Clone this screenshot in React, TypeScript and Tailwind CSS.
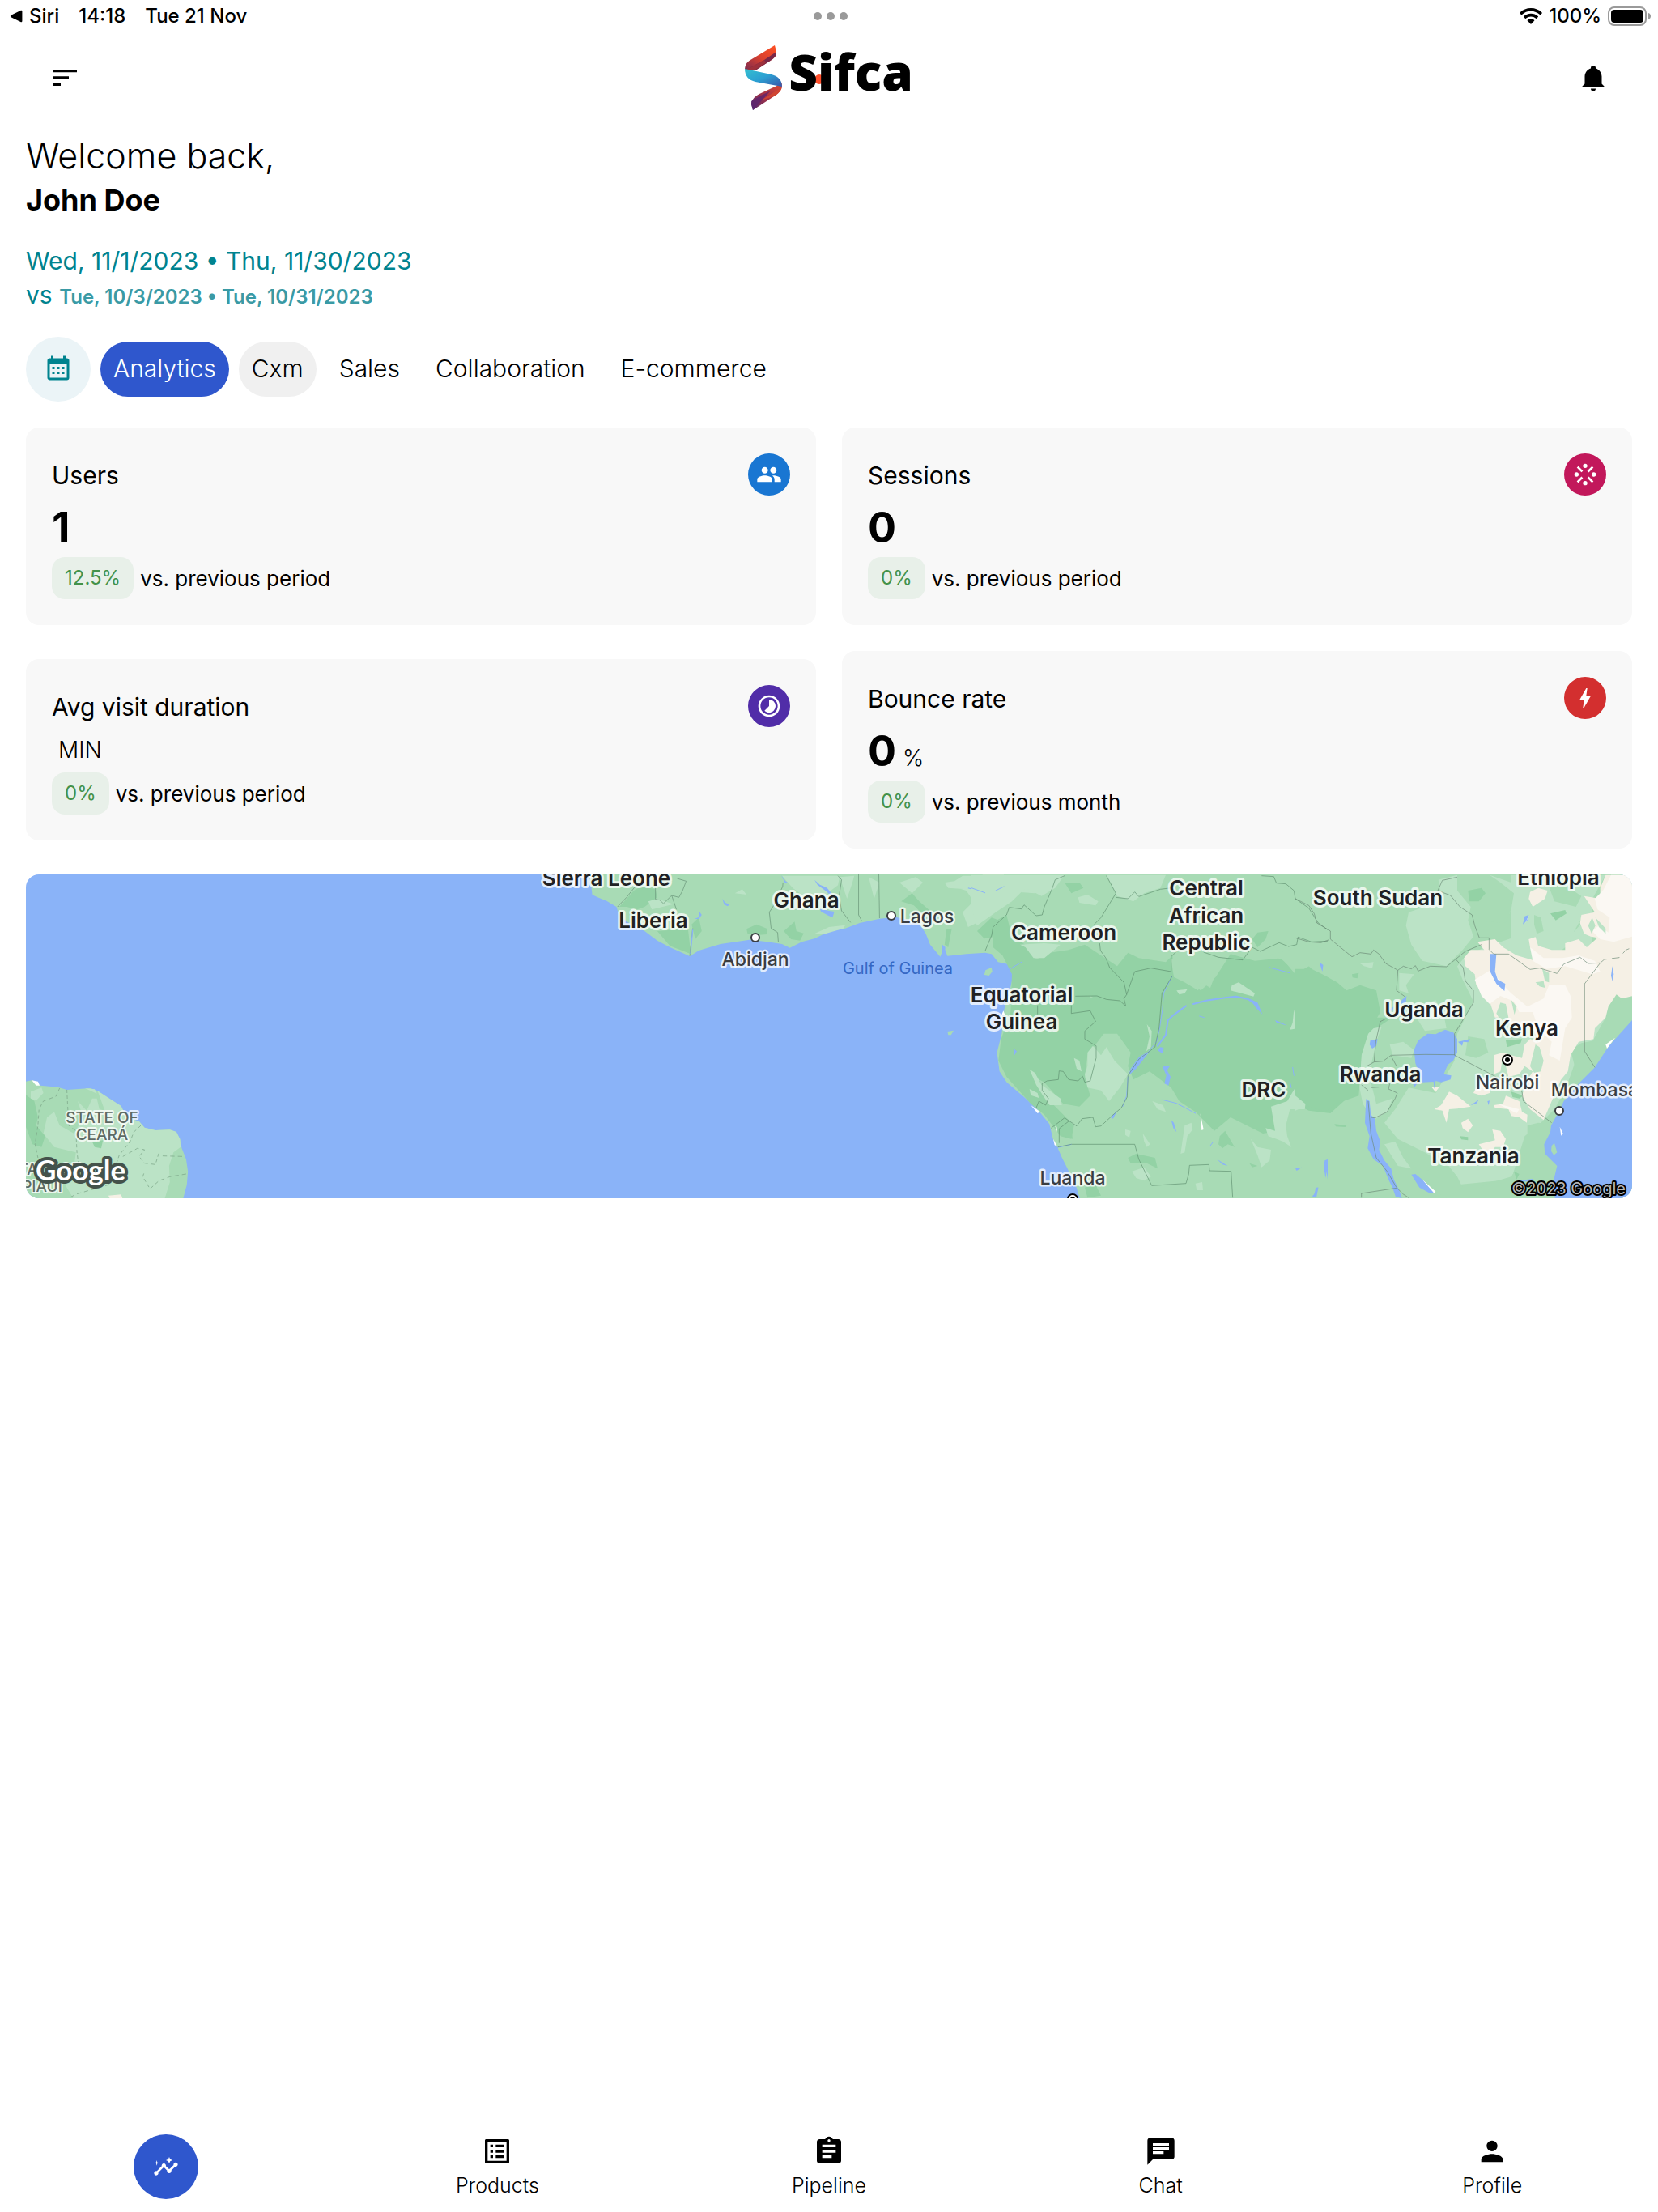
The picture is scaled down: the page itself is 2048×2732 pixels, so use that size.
import type { ReactNode } from "react";
import {
  MdSort,
  MdPeople,
  MdStream,
  MdTimelapse,
  MdBolt,
  MdInsights,
  MdListAlt,
  MdAssignment,
  MdChat,
  MdPerson,
} from "react-icons/md";

function StatusBar() {
  return (
    <div className="grid h-10 grid-cols-3 items-center pl-3 pr-2 text-2xl font-medium leading-10">
      <div className="flex items-center gap-6">
        <a href="#siri" className="flex items-center gap-2">
          <svg viewBox="0 0 16 16" className="size-4" fill="currentColor" aria-hidden="true">
            <path d="M1.6 6.8 13.4.9c1-.5 2 .1 2 1.1v12c0 1-1 1.600-2 1.100L1.600 9.200c-1-.5-1-1.900 0-2.400Z" />
          </svg>
          Siri
        </a>
        <span>14:18</span>
        <span>Tue 21 Nov</span>
      </div>
      <div className="flex justify-center gap-1.5">
        <i className="size-2.5 rounded-full bg-[#9a9a9a]" />
        <i className="size-2.5 rounded-full bg-[#9a9a9a]" />
        <i className="size-2.5 rounded-full bg-[#9a9a9a]" />
      </div>
      <div className="flex items-center justify-end gap-2">
        <svg viewBox="0 0 28 20" className="h-5 w-7" fill="currentColor" aria-hidden="true">
          <path d="M14 0C8.700 0 3.900 2 .4 5.400a.7.7 0 0 0 0 1l1.600 1.600c.3.300.7.300 1 0A15.800 15.800 0 0 1 14 3.700c4.200 0 8 1.600 11 4.300.3.300.7.300 1 0l1.600-1.600a.7.7 0 0 0 0-1C24.100 2 19.300 0 14 0Z" />
          <path d="M14 6.700c-3.400 0-6.500 1.300-8.800 3.400a.7.7 0 0 0 0 1l1.700 1.700c.2.200.6.300.9 0a9.400 9.400 0 0 1 12.400 0c.3.300.7.200.9 0l1.700-1.700a.7.7 0 0 0 0-1A13 13 0 0 0 14 6.700Z" />
          <path d="M14 13.300c-1.600 0-3 .5-4.100 1.500a.6.600 0 0 0 0 1l3.600 3.600c.3.300.7.300 1 0l3.600-3.600c.3-.3.300-.7 0-1a6.100 6.100 0 0 0-4.100-1.500Z" />
        </svg>
        <span>100%</span>
        <svg viewBox="0 0 54 24" className="h-6 w-[54px]" aria-hidden="true">
          <rect x="1" y="1" width="46" height="22" rx="7" fill="none" stroke="#9a9a9a" strokeWidth="2" />
          <rect x="4" y="4" width="40" height="16" rx="4" fill="#000" />
          <path d="M50 8c2 .6 3 2.200 3 4s-1 3.400-3 4Z" fill="#9a9a9a" />
        </svg>
      </div>
    </div>
  );
}

function Logo() {
  return (
    <div className="relative flex items-center gap-2" role="img" aria-label="Sifca">
      <svg viewBox="0 0 46 80" className="h-20 w-[46px]" aria-hidden="true">
        <defs>
          <linearGradient id="blue" x1="0" y1="0" x2="1" y2="1">
            <stop offset="0" stopColor="#35c0d0" />
            <stop offset=".5" stopColor="#2b9fd2" />
            <stop offset="1" stopColor="#3b55a8" />
          </linearGradient>
          <linearGradient id="top" x1="1" y1="0" x2="0" y2="1">
            <stop offset="0" stopColor="#ff5022" />
            <stop offset=".5" stopColor="#d8402f" />
            <stop offset="1" stopColor="#7a2a50" />
          </linearGradient>
          <linearGradient id="low" x1="1" y1="0" x2="0" y2="1">
            <stop offset="0" stopColor="#e04a30" />
            <stop offset=".5" stopColor="#a83245" />
            <stop offset="1" stopColor="#4c2a70" />
          </linearGradient>
        </defs>
        <path d="M37 0 7 18C1.500 21.500 0 25 0 31l13 0 20-13c5-3.500 6-6 6-10Z" fill="url(#top)" />
        <path d="M39 8 24 18 4 29l-4 2h13l20-13c5-3.500 6-6 6-10Z" fill="#7a2848" />
        <path d="M24 18 10 26l-8 4h11l13-8.500Z" fill="#a83238" opacity=".8" />
        <path d="M46 47 18 60C11 64 8 68 8 73l2 7 26-17c8-5 10-9 10-16Z" fill="url(#low)" />
        <path d="M8 69c4-3 14-8 24-13L10 80l-2-7Z" fill="#5a2370" opacity=".75" />
        <path d="M46 50c-2 4-5 5-10 8L20 68l16-5c8-5 10-9 10-13Z" fill="#d04432" />
        <path d="M0 29 33 36c8 2 13 7 13 15L13 45C5 43 0 38 0 29Z" fill="url(#blue)" />
      </svg>
      <span className="relative mb-4 font-['Open_Sans'] text-[62px] font-extrabold leading-[72px]">
        <i className="absolute left-8 top-10 size-3 rounded-full bg-[#ff4f2b]" />
        <span className="relative">Sifca</span>
      </span>
    </div>
  );
}

function Header() {
  return (
    <header className="grid h-28 grid-cols-3 items-center px-[60px]">
      <button type="button" aria-label="Menu" className="justify-self-start">
        <MdSort className="size-10" />
      </button>
      <div className="justify-self-center">
        <Logo />
      </div>
      <button type="button" aria-label="Notifications" className="justify-self-end">
        <svg viewBox="0 0 24 24" className="size-10 p-0.5" fill="currentColor" aria-hidden="true">
          <path d="M21,19V20H3V19L5,17V11C5,7.900 7.030,5.170 10,4.290C10,4.190 10,4.100 10,4A2,2 0 0,1 12,2A2,2 0 0,1 14,4C14,4.100 14,4.190 14,4.290C16.970,5.170 19,7.900 19,11V17L21,19M14,21A2,2 0 0,1 12,23A2,2 0 0,1 10,21" />
        </svg>
      </button>
    </header>
  );
}

const tabs = [
  { name: "Analytics", style: "bg-[#2f57cd] text-white" },
  { name: "Cxm", style: "bg-[#f0f0f0]" },
  { name: "Sales", style: "" },
  { name: "Collaboration", style: "" },
  { name: "E-commerce", style: "" },
];

function Tabs() {
  return (
    <div className="mt-[30px] flex items-center gap-3">
      <button
        type="button"
        aria-label="Choose dates"
        className="flex size-20 items-center justify-center rounded-full bg-[#ebf4f7] text-[#00838f]"
      >
        <svg viewBox="0 0 24 24" className="size-9" fill="currentColor" aria-hidden="true">
          <path d="M9,10V12H7V10H9M13,10V12H11V10H13M17,10V12H15V10H17M19,3A2,2 0 0,1 21,5V19A2,2 0 0,1 19,21H5C3.890,21 3,20.100 3,19V5A2,2 0 0,1 5,3H6V1H8V3H16V1H18V3H19M19,19V8H5V19H19M9,14V16H7V14H9M13,14V16H11V14H13M17,14V16H15V14H17Z" />
        </svg>
      </button>
      {tabs.map((t) => (
        <button
          key={t.name}
          type="button"
          className={`h-[68px] rounded-full px-4 pb-0.5 text-[30px] font-light ${t.style}`}
        >
          {t.name}
        </button>
      ))}
    </div>
  );
}

type StatProps = {
  title: string;
  value?: string;
  unit?: string;
  change: string;
  period: string;
  color: string;
  icon: ReactNode;
};

function StatCard({ title, value, unit, change, period, color, icon }: StatProps) {
  return (
    <section className="rounded-2xl bg-[#f8f8f8] p-8">
      <div className="flex h-[52px] items-center justify-between">
        <h2 className="pt-0.5 text-[30px] font-normal">{title}</h2>
        <span className={`flex size-[52px] items-center justify-center rounded-full text-white ${color}`}>
          {icon}
        </span>
      </div>
      <p className="flex items-baseline gap-2">
        {value ? <span className="-mb-1 text-[52px] font-bold leading-[80px]">{value}</span> : <span />}
        {unit && <span className="text-[28px] font-light leading-[56px]">{unit}</span>}
      </p>
      <p className="flex items-center gap-2">
        <span className="flex h-[52px] items-center rounded-2xl bg-[#e8f0e9] px-4 text-2xl text-[#43924a]">{change}</span>
        <span className="text-[26px]">{period}</span>
      </p>
    </section>
  );
}

const countries: [string, number, number][] = [
  ["Sierra Leone", 717, 14],
  ["Liberia", 775, 66],
  ["Ghana", 964, 41],
  ["Cameroon", 1282, 81],
  ["Central", 1458, 26],
  ["African", 1458, 60],
  ["Republic", 1458, 93],
  ["South Sudan", 1670, 38],
  ["Ethiopia", 1893, 13],
  ["Equatorial", 1230, 158],
  ["Guinea", 1230, 191],
  ["DRC", 1529, 275],
  ["Uganda", 1727, 176],
  ["Kenya", 1854, 199],
  ["Rwanda", 1673, 256],
  ["Tanzania", 1788, 357],
];

const cities: [string, number, number][] = [
  ["Lagos", 1113, 60],
  ["Abidjan", 901, 113],
  ["Nairobi", 1830, 265],
  ["Mombasa", 1938, 274],
  ["Luanda", 1293, 383],
];

const states: [string, number, number][] = [
  ["STATE OF", 94, 307],
  ["CEARÁ", 94, 328],
  ["STATE OF", 23, 371],
  ["PIAUÍ", 20, 392],
];

function WorldMap() {
  return (
    <div className="mt-8 overflow-hidden rounded-2xl bg-[#8ab3f8]">
      <svg
        viewBox="0 0 1984 400"
        preserveAspectRatio="xMidYMid slice"
        className="block h-[400px] w-full"
        role="img"
        aria-label="Map of visitors"
      >
        {/* South America */}
        <g transform="translate(-32 -10) scale(.44643 .33333)">
          <path fill="#a8dbb5" d="M60 800 90 792 112 812 160 818 185 828 250 822 270 832 300 858 335 888 350 930 385 945 400 968 430 978 470 976 488 984 498 1010 503 1045 515 1085 520 1130 517 1180 506 1235H60Z" />
          <path fill="#bbe3c6" d="M270 832 300 858 335 888 350 930 385 945 400 968 430 978 470 976 488 984 498 1010 500 1040 480 1060 468 1110 470 1170 455 1235H205L180 1180 205 1110 210 1060 150 1040 120 990 130 930 150 910 165 960 205 990 230 930 215 870 240 905 255 860 268 860 275 900 290 905Z" />
          <path fill="#93d2a5" d="M70 845 95 870 105 930 100 960 125 1000 115 1040 90 1030 70 960ZM255 1020 285 1015 280 1045 262 1040Z" />
          <path fill="#bbe3c6" d="M85 835 115 820 120 840 100 868 85 860ZM235 822 262 826 268 842Z" />
          <path fill="#fff" d="M88 793 105 797 110 812 100 812Z" />
          <path fill="#f5f0e5" d="M300 1220 335 1216 340 1235H305Z" />
          <g fill="none" stroke="#7fa98b" strokeWidth="2" strokeDasharray="12 9">
            <path d="M165 822 155 852 120 870 108 900 105 960 97 1030 105 1080M185 828 190 960 210 980 213 1060 218 1110M390 960 370 985 360 1020 330 1070 320 1110M340 1075 380 1045 400 1050 385 1075 400 1100 430 1105 440 1060M450 1073 505 1075M515 1140 470 1150 440 1165 415 1195 395 1150 400 1130M320 1140 300 1180 210 1215 190 1230" />
          </g>
        </g>
        {/* African mainland: west coast down to Angola */}
        <g transform="translate(608 -10) scale(.44643 .33333)">
          <path fill="#a8dbb5" d="M195 30 203 80 205 105 220 115 245 128 272 150 278 175 300 205 350 240 385 275 420 300 475 333 500 312 560 288 610 278 640 272 690 280 730 288 752 302 785 280 820 268 860 242 905 230 945 210 1000 194 1045 188 1085 200 1112 215 1128 250 1140 290 1168 335 1178 300 1188 332 1240 325 1292 320 1310 325 1328 355 1365 365 1370 400 1362 450 1345 530 1338 620 1325 690 1332 760 1352 800 1400 855 1440 905 1470 955 1480 1010 1492 1040 1505 1080 1520 1120 1545 1190 1555 1235H3100V25H195Z" />
          <path fill="#93d2a5" d="M320 90 340 75 380 85 385 115 350 150 330 160 300 150 280 150ZM385 240 470 232 478 325 420 295ZM632 232 660 215 690 232 688 252 660 255 635 250ZM735 240 765 205 770 240 790 248 780 275 755 270ZM1270 240 1310 190 1340 205 1320 260 1290 268ZM480 215 500 190 508 240 490 270Z" />
          <path fill="#bbe3c6" d="M730 35 890 35 885 70 860 95 835 130 790 110 760 80ZM1230 35 1510 35 1460 60 1430 100 1380 95 1330 130 1300 190 1245 225 1230 170 1260 130 1240 90 1190 70ZM890 40 910 120 925 60 930 35ZM970 40 985 120 1000 60ZM1055 60 1100 40 1120 60 1090 100ZM1180 60 1230 50 1240 85 1190 80ZM820 250 860 225 905 218 900 230 850 250ZM620 85 632 105 600 100ZM360 130 385 120 430 140 370 160Z" />
          <path fill="#93d2a5" d="M1090 100 1110 130 1140 165 1125 185 1095 145 1060 130ZM1185 235 1200 230 1190 300 1180 290Z" />
          <path fill="#a8dbb5" d="M1293 385 1310 375 1312 390 1303 405 1290 402ZM1188 612 1205 608 1198 625 1190 625Z" />
          <path fill="#f5f0e5" d="M1285 32 1345 32 1320 42 1300 38 1300 55 1285 50Z" />
          <g fill="#8ab3f8">
            <path d="M820 50 835 68 855 80 870 105 865 108 850 90 828 68ZM835 158 860 165 875 168 870 190 858 182 838 168ZM565 120 573 135 585 140 580 148 570 142ZM500 165 508 180 500 195 488 195 500 188ZM1172 288 1182 300 1180 338 1172 330ZM1370 670 1383 680 1378 700 1370 690ZM728 32 740 55 748 62 738 60Z" />
          </g>
          <g fill="none" stroke="#6f9a7e" strokeWidth="2">
            <path d="M275 150 300 115 322 78M380 80 380 122 392 125 402 138 425 108 445 115 455 90 465 55 440 45M425 108 438 160M483 230 475 332M733 60 732 75 705 150 695 170 700 230 718 245 720 280M885 35 895 50 888 110 895 165 920 208M942 30 942 180 950 200M998 30 1000 192" />
          </g>
          <g fill="none" stroke="#8ab3f8" strokeWidth="3">
            <path d="M1245 80 1290 97M1320 92 1343 75M1355 385 1388 355M483 235 477 325" />
          </g>
        </g>
        {/* Central Africa */}
        <g transform="translate(1168 -10) scale(.33333)">
          <path fill="#93d2a5" d="M150 400 115 330 80 300 75 210 130 180 150 260 215 300 240 345 290 320 360 310 420 290 480 330 540 370 580 320 620 340 720 355 745 330 750 400 800 430 850 460 905 410 960 325 1050 350 1150 340 1200 400 1250 370 1320 410 1360 520 1450 480 1500 560 1560 560 1500 600 1445 690 1440 800 1380 870 1330 915 1250 905 1200 880 1120 900 1140 980 1080 990 1020 960 960 930 900 980 830 910 770 870 740 820 700 790 660 760 600 790 580 740 590 690 540 620 490 620 430 700 420 780 440 850 400 890 340 880 270 800 250 790 300 880 380 960 370 1010 330 1000 270 920 220 880 130 780 100 720 110 640 145 540Z" />
          <path fill="#a8dbb5" d="M740 345 900 340 900 410 885 450 850 430 840 460 790 430 750 410ZM1100 330 1250 290 1320 310 1320 410 1280 400 1250 370 1200 390 1150 345ZM440 480 450 485 440 490Z" />
          <path fill="#bbe3c6" d="M0 32 345 32 310 80 260 110 200 80 150 130 90 170 20 220 0 150ZM500 32 720 32 700 80 640 100 600 130 540 110 520 70ZM395 115 430 105 470 130 460 145 400 135ZM430 690 450 665 480 700 500 670 530 720 580 770 550 820 510 870 480 830 430 820 420 770 430 740ZM215 752 235 765 260 810 330 860 335 885 290 885 265 850 240 810ZM215 825 245 840 250 858 220 848ZM380 710 400 720 408 760 390 750ZM650 585 668 610 665 670 648 685 660 630ZM670 870 710 885 720 910 690 900ZM790 960 815 950 820 975 800 1000 790 1060 775 1065ZM1110 890 1170 870 1200 820 1215 850 1240 860 1235 900 1180 900 1165 960 1170 1000 1185 1040 1155 1020 1130 1010 1100 1000 1090 970 1125 980ZM1035 1010 1060 1040 1110 1050 1105 1090 1075 1115 1060 1070ZM595 1130 640 1115 665 1150 640 1165 610 1155ZM830 1175 855 1170 858 1200 835 1200ZM965 440 990 430 1050 470 1045 482 960 460ZM1195 530 1203 580 1210 600 1180 605 1190 580ZM570 975 590 980 585 1005 570 995ZM635 990 662 1030 650 1040 640 1020ZM760 460 800 455 790 470 770 475ZM180 290 270 285 330 290 270 340 230 340 200 300Z" />
          <path fill="#93d2a5" d="M920 1000 940 980 975 1040 950 1030 930 1045 915 1030ZM1030 1100 1060 1110 1040 1115ZM580 1080 610 1065 680 1080 690 1120 650 1100 590 1100ZM420 1190 460 1180 480 1220 430 1228ZM1040 270 1060 245 1100 240 1090 270 1060 300ZM345 60 400 60 415 80 370 100ZM320 980 370 970 375 1010 345 1000Z" />
          <path fill="#fff" d="M220 885 255 910 245 915ZM303 1010 318 1038 308 1033ZM118 535 125 552 112 550ZM310 962 316 965 318 985ZM848 915 860 975 853 978Z" />
          <g fill="#8ab3f8">
            <path d="M700 670 712 672 710 695 690 682ZM640 712 610 750 582 775 590 750 620 708 665 680ZM708 742 735 740 725 755 738 780 730 812 715 805 722 775ZM1125 570 1150 580 1170 590 1130 578ZM1290 358 1303 365 1300 390ZM740 940 750 950 760 985 748 970ZM910 1085 950 1110 930 1105ZM1200 1120 1225 1115 1205 1128ZM1310 1090 1320 1085 1320 1160ZM1275 1190 1285 1190 1275 1228 1262 1222 1272 1215ZM515 930 540 905 525 935ZM155 675 168 685 160 700ZM1030 490 1060 505 1078 548 1055 525Z" />
          </g>
          <g fill="none" stroke="#8ab3f8" strokeLinecap="round">
            <path strokeWidth="6" d="M690 665 720 625 728 570 750 550 795 517M822 510 870 497 940 487 980 482 1025 492 1050 510" />
            <path strokeWidth="3" d="M743 408 712 470 708 530 697 600 686 650 660 682M1105 375 1180 395M708 865 760 878 830 915M135 385 185 355M320 1042 370 1030M580 780 575 850 560 890M0 80 50 98M90 90 120 75M885 1035 895 1022M845 555 862 560M1190 745 1195 775M1180 800 1185 820" />
          </g>
          <g fill="none" stroke="#5f8f70" strokeWidth="2">
            <path d="M345 35 310 50 300 80 270 150 262 180 240 183 195 143 185 158 140 152 130 180 80 225 75 255 50 315M500 35 535 100 520 125 480 190 455 215M535 115 580 120 605 95 620 112 700 85 740 80 775 45M475 285 478 312 498 340 512 375 565 430 575 475 605 390 665 377 740 390 740 335 765 310M860 318 915 337 1005 347 1040 300 1070 315 1140 283 1175 297 1205 290 1210 262 1260 280 1320 277M1075 35 1120 38 1130 62 1165 65 1195 90 1200 120 1250 155 1285 210 1320 235M575 475 565 490 572 518 550 498 500 493 465 480 385 481M245 515V548M370 515V545L440 535 460 575 420 610 420 640 462 665 462 710 440 795 420 800 412 778 395 795 360 790 340 760 325 758 322 790 280 795 262 805 262 830 285 860 275 885 250 870 240 895M295 970 345 932 390 962 410 935 450 930 460 965 480 962 520 925 555 895 577 855 580 775 620 715 680 670 695 600 706 470 745 405M360 945 325 972 325 1025M320 1040 370 1030H605L620 1085 668 1183 795 1175 805 1140 808 1108 880 1105 882 1128 962 1130 968 1228" />
          </g>
        </g>
        {/* East Africa */}
        <g transform="translate(1568 -10) scale(.33333)">
          <path fill="#bbe3c6" d="M420 170 480 150 540 100 530 50 600 32 720 32 800 60 820 130 790 180 700 200 640 200 660 260 620 310 560 370 470 350 430 290 410 220ZM600 370 625 340 700 300 850 250 1000 280 1070 200 1060 150 1130 130 1000 120 1090 32 1150 32 1000 300 880 400 800 560 1150 560 1100 650 1060 660 1000 830 960 900 900 960 850 1000 800 1160 700 1170 600 1180 560 1110 480 1060 380 1010 330 950 370 900 420 820 520 840 590 720 600 620 660 500 620 420ZM385 395 440 400 410 440 420 470 385 460ZM290 600 320 595 300 650 280 740 240 760 250 640ZM350 660 400 650 440 680 430 710 360 700ZM230 780 280 800 300 880 360 860 340 910 290 940 250 880ZM240 360 290 355 285 378 255 370ZM0 865 30 860 35 890 0 905ZM430 530 520 495 550 550 560 600 480 610ZM330 1030 370 1020 400 1080 430 1120 380 1110ZM800 32 1100 32 1100 300 800 300Z" />
          <path fill="#a8dbb5" d="M640 630 700 640 715 690 670 710 630 700ZM640 200 780 210 800 160 810 100 760 60 720 32 600 32 600 90 650 150ZM860 960 900 950 950 955 925 1020 920 1060 965 1110 950 1160 960 1230 640 1230 700 1180 800 1150 860 1060ZM1020 680 1060 655 1110 645 1150 590 1160 520 1250 480 1250 570 1150 680 1100 740 1045 800 1020 810 1040 760Z" />
          <path fill="#a8dbb5" d="M480 1130 560 1100 600 1150 620 1190 560 1230 480 1180ZM940 75 1000 70 1060 110 1040 150 960 130Z" />
          <path fill="#93d2a5" d="M640 90 690 80 705 100 680 130 645 130ZM945 175 1000 162 1005 175 965 200ZM0 380 60 380 100 400 155 430 190 460 240 440 300 460 315 540 270 620 245 700 240 790 235 850 150 880 110 910 50 890 0 850ZM810 1130 830 1140 820 1160ZM610 1000 640 1003 640 1015 615 1012ZM145 955 190 960 185 966 150 964ZM210 400 235 395 230 415 212 412ZM780 645 840 640 835 655 785 670ZM800 835 845 850 830 860 805 855Z" />
          <path fill="#f5f0e5" d="M1150 32H1250V480L1210 490 1190 475 1160 520 1150 560 1110 600 1105 640 1050 650 1020 700 1010 760 985 790 950 870 920 940 870 900 840 850 855 800 880 760 850 740 830 770 790 780 770 700 760 760 735 770 735 700 770 690 800 700 840 710 850 660 870 640 900 650 880 600 800 590 780 560 740 560 720 500 700 480 690 440 670 440 665 400 630 370 625 340 650 310 700 310 675 280 740 270 770 300 820 330 890 350 870 300 865 270 890 262 900 295 950 310 1000 310 1000 285 1050 270 1080 300 1120 265 1095 260 1070 250 1055 210 1060 180 1110 170 1090 140 1070 110 1130 120 1130 80ZM865 120 870 95 900 80 935 90 925 120 880 150ZM515 900 540 885 570 835 600 850 650 890 600 898 570 900 560 950 545 905ZM615 950 640 935 658 960 640 985 620 970ZM680 1030 740 1015 730 975 760 980 780 1010 770 1040 740 1040 720 1070 690 1045ZM735 885 770 880 780 850 830 870 840 910 860 920 858 950 830 930 800 925 790 900 740 895ZM690 780 730 790 720 840 690 850 660 840ZM505 818 535 816 520 836Z" />
          <path fill="#fbf8f3" d="M1170 32H1250V260L1180 280 1130 270 1100 240 1125 220 1160 245 1165 190 1120 160 1110 120 1140 90ZM665 420 730 380 760 430 800 470 860 520 920 490 940 440 1000 440 1020 480 1025 560 1000 600 980 720 940 700 950 650 900 600 880 540 830 540 810 500 760 480 720 510 690 480ZM870 300 920 340 990 340 1050 330 1110 350 1130 390 1100 400 1000 370 930 380 880 350ZM750 880 830 900 820 915Z" />
          <path fill="#bbe3c6" d="M1085 220 1100 190 1112 220 1098 250ZM1112 190 1150 230 1150 250 1125 225ZM800 495 820 520 812 550ZM745 545 760 505 780 510 790 560 760 570ZM870 740 890 660 905 670 920 720 910 760 885 765ZM915 380 940 395 940 430 925 425ZM890 430 920 425 925 450 905 445Z" />
          <path fill="#a8dbb5" d="M885 180 910 190 920 240 895 250 885 215Z" />
          <g fill="#8ab3f8">
            <path d="M440 680 455 645 490 620 520 622 555 605 585 615 600 640 600 690 585 720 565 735 550 770 578 775 575 790 540 800 520 795 515 825 512 798 470 800 460 770 445 730ZM722 325H745L740 390 750 420 778 435 775 462 745 435 722 390ZM262 862 275 870 280 920 295 935 300 980 315 1020 310 1050 330 1090 355 1120 365 1160 385 1200 395 1230 372 1225 360 1190 345 1160 325 1110 290 1085 268 1045 275 1000 258 950ZM278 645 305 640 300 665 285 675 275 660ZM395 495 412 480 410 505 390 510ZM603 650 648 640 640 652 622 650 618 665ZM430 1142 445 1140 475 1165 515 1210 500 1212 460 1190ZM843 215 850 185 865 180 860 200ZM1175 370 1180 400 1175 425 1170 405ZM650 885 680 865 670 880ZM712 870 720 868 716 885ZM93 358 103 368 100 388ZM110 1088 120 1110 112 1155 105 1110ZM65 1225 80 1190 85 1190 78 1228ZM435 800 455 800 440 820ZM350 530 365 520 358 540ZM1250 568 1160 668 1110 745 1050 805 995 870 970 920 948 960 945 985 922 1030 925 1065 970 1110 958 1160 962 1235H1250ZM825 1165 880 1158 875 1170Z" />
          </g>
          <path fill="#a8dbb5" d="M950 1035 960 1025 970 1060 958 1070 948 1055Z" />
          <path fill="#fff" d="M1150 660 1185 635 1155 675ZM980 965 992 990 985 998ZM470 1160 520 1205 515 1212ZM850 215 863 190 865 182Z" />
          <g fill="none" stroke="#6b8a75" strokeWidth="2">
            <path d="M600 40 545 52 528 90 575 108 610 150 655 180 665 220 682 265H718V308L735 325H790L870 382 905 377 970 397 995 362 1055 337 1085 360 1130 358 1072 435V685L1110 745M0 120 50 145 70 175 80 210 130 240 130 270 210 335 240 320 280 325 290 310 310 325 335 360 380 385 400 370 430 380 445 368 455 388 500 370 560 372 630 315 690 290M0 265 50 280 95 283 125 272M380 385 375 460 405 482M595 345 622 375 630 425 660 460 660 505 590 620V700L740 778 840 835 845 870 950 950M335 565 315 575 298 650 292 725 325 722 355 700 480 697 590 698M355 703 375 740M292 725 265 740M245 810 270 830M350 805 345 825 378 840 370 860 340 910 295 932 280 930M270 870 280 990 300 1080 340 1130 375 1190 400 1215 420 1228M375 1192 245 1212V1228M280 820 310 818" />
            <path strokeDasharray="30 18" d="M1130 358 1145 345 1200 338 1225 310 1250 300" />
          </g>
        </g>

        <g textAnchor="middle" stroke="#fff" strokeLinejoin="round" strokeOpacity=".75" style={{ paintOrder: "stroke" }}>
          <g className="text-[26px] font-semibold" fill="#202124" strokeWidth="6">
            {countries.map(([name, x, y]) => (
              <text key={name} x={x} y={y}>{name}</text>
            ))}
          </g>
          <g className="text-[23px] font-medium" fill="#3a3d42" strokeWidth="5">
            {cities.map(([name, x, y]) => (
              <text key={name} x={x} y={y}>{name}</text>
            ))}
          </g>
          <g className="text-[19px] font-medium" fill="#5d6a63" strokeWidth="4">
            {states.map(([name, x, y]) => (
              <text key={`${name}${y}`} x={x} y={y}>{name}</text>
            ))}
          </g>
          <text x="1077" y="123" className="text-[20px]" fill="#3568c4" strokeWidth="0">Gulf of Guinea</text>
        </g>

        <g fill="#fff" stroke="#3a3d42" strokeWidth="2">
          <circle cx="1069" cy="51" r="5" />
          <circle cx="901" cy="78" r="5" />
          <circle cx="1894" cy="292" r="5" />
          <circle cx="1830" cy="229" r="6" stroke="#000" />
          <circle cx="1293" cy="401" r="6" stroke="#000" />
        </g>
        <circle cx="1830" cy="229" r="3" />
        <circle cx="1293" cy="401" r="3" />

        <text x="12" y="378" className="font-['Lato'] text-[35px] font-bold" fill="#fff" stroke="#44524b" strokeWidth="8" strokeLinejoin="round" style={{ paintOrder: "stroke" }}>
          Google
        </text>
        <text x="1976" y="395" textAnchor="end" className="text-[20px]" fill="#b5b5b5" stroke="#000" strokeWidth="4" strokeLinejoin="round" style={{ paintOrder: "stroke" }}>
          ©2023 Google
        </text>
      </svg>
    </div>
  );
}

const navItems = [
  { name: "Products", Icon: MdListAlt },
  { name: "Pipeline", Icon: MdAssignment },
  { name: "Chat", Icon: MdChat },
  { name: "Profile", Icon: MdPerson },
];

function BottomNav() {
  return (
    <nav className="mt-auto grid grid-cols-5 items-center pb-4">
      <a
        href="#insights"
        aria-label="Insights"
        className="flex size-20 items-center justify-center justify-self-center rounded-full bg-[#2f57cd] text-white"
      >
        <MdInsights className="size-8" />
      </a>
      {navItems.map(({ name, Icon }) => (
        <a key={name} href={`#${name.toLowerCase()}`} className="flex flex-col items-center gap-1.5 text-[25px] font-light leading-8">
          <Icon className="size-10" />
          {name}
        </a>
      ))}
    </nav>
  );
}

export default function App() {
  return (
    <div className="flex min-h-screen flex-col bg-white font-['Inter',sans-serif] text-black">
      <StatusBar />
      <Header />
      <main className="px-8 pt-3">
        <h1>
          <span className="block text-[43px] font-light leading-[56px]">Welcome back,</span>
          <span className="mt-1 block text-[36px] font-bold leading-[46px]">John Doe</span>
        </h1>
        <p className="mt-8 text-[30px] leading-10 text-[#00838f]">Wed, 11/1/2023 • Thu, 11/30/2023</p>
        <p className="text-[30px] leading-[44px] text-[#00838f]">
          vs <span className="text-2xl font-semibold text-[#3a9aa5]">Tue, 10/3/2023 • Tue, 10/31/2023</span>
        </p>
        <Tabs />
        <div className="mt-8 grid grid-cols-2 items-center gap-8">
          <StatCard title="Users" value="1" change="12.5%" period="vs. previous period" color="bg-[#1976d2]" icon={<MdPeople className="size-8" />} />
          <StatCard title="Sessions" value="0" change="0%" period="vs. previous period" color="bg-[#c2185b]" icon={<MdStream className="size-8" />} />
          <StatCard title="Avg visit duration" unit="MIN" change="0%" period="vs. previous period" color="bg-[#512da8]" icon={<MdTimelapse className="size-8" />} />
          <StatCard title="Bounce rate" value="0" unit="%" change="0%" period="vs. previous month" color="bg-[#d32f2f]" icon={<MdBolt className="size-8" />} />
        </div>
        <WorldMap />
      </main>
      <BottomNav />
    </div>
  );
}
